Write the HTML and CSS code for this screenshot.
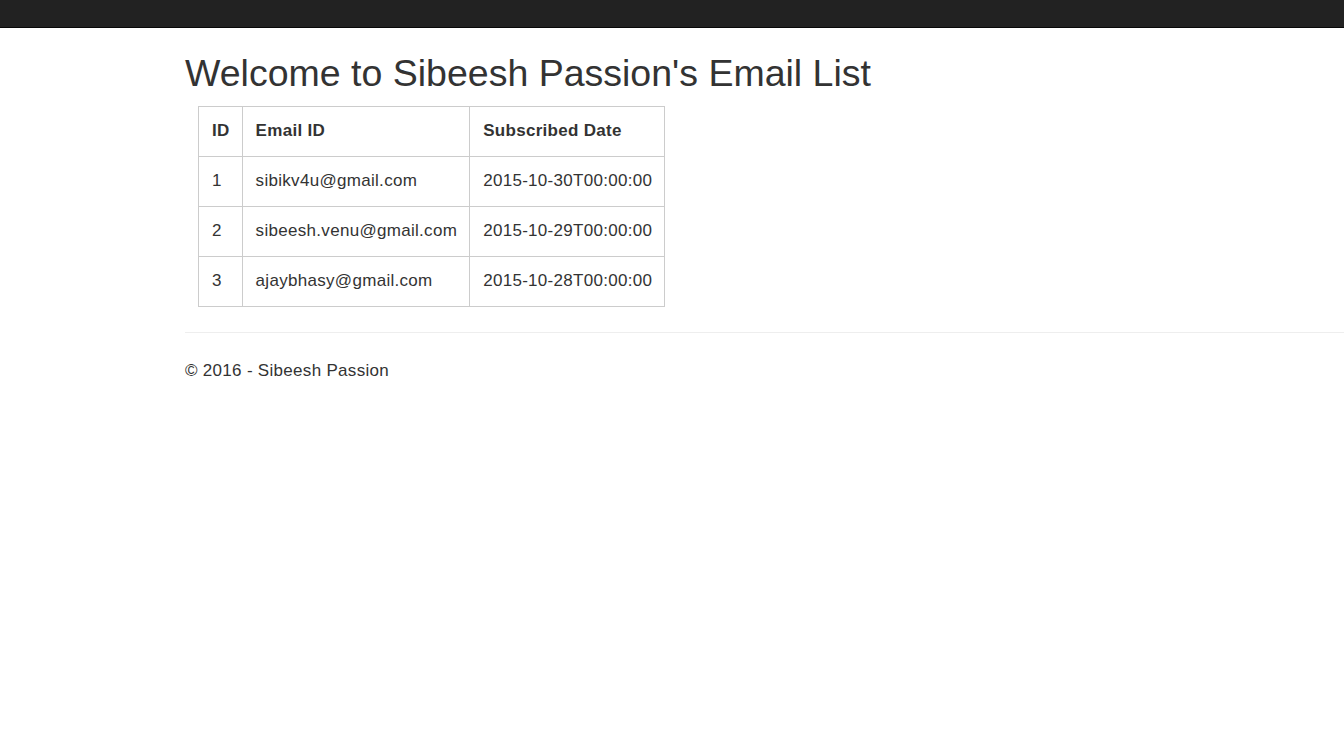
FILE: index.html
```html
<!DOCTYPE html>
<html>
<head>
<meta charset="utf-8">
<title>Email List</title>
<link rel="stylesheet" href="styles.css">
</head>
<body>
<div class="navbar"></div>
<div class="body-content">
  <h2 class="title">Welcome to Sibeesh Passion's Email List</h2>
  <table class="grid">
    <thead>
      <tr><th>ID</th><th>Email ID</th><th>Subscribed Date</th></tr>
    </thead>
    <tbody>
      <tr><td>1</td><td>sibikv4u@gmail.com</td><td>2015-10-30T00:00:00</td></tr>
      <tr><td>2</td><td>sibeesh.venu@gmail.com</td><td>2015-10-29T00:00:00</td></tr>
      <tr><td>3</td><td>ajaybhasy@gmail.com</td><td>2015-10-28T00:00:00</td></tr>
    </tbody>
  </table>
  <hr class="rule">
  <footer class="footer">
    <p>&copy; 2016 - Sibeesh Passion</p>
  </footer>
</div>
</body>
</html>
```
FILE: styles.css
```css
html, body {
  margin: 0;
  padding: 0;
  background: #fff;
}
body {
  font-family: "Liberation Sans", Arial, Helvetica, sans-serif;
  font-size: 17px;
  letter-spacing: 0.3px;
  color: #333;
  line-height: 1.42857;
}
.navbar {
  height: 27px;
  background: #222;
  border-bottom: 1px solid #080808;
}
.body-content {
  padding-left: 185px;
}
.title {
  margin: 0;
  padding-top: 25px;
  font-size: 37.5px;
  letter-spacing: 0;
  font-weight: 400;
  line-height: 1.1;
  height: 53px;
}
.grid {
  margin-left: 13px;
  border-collapse: collapse;
  border: 1px solid #ccc;
}
.grid th, .grid td {
  border: 1px solid #ccc;
  padding: 0 12px 0 13px;
  height: 49px;
  text-align: left;
  vertical-align: middle;
}
.grid th {
  font-weight: 700;
}
.rule {
  margin: 25px 0 0 0;
  border: 0;
  border-top: 1px solid #eee;
}
.footer p {
  margin: 26px 0 0 0;
}
```
